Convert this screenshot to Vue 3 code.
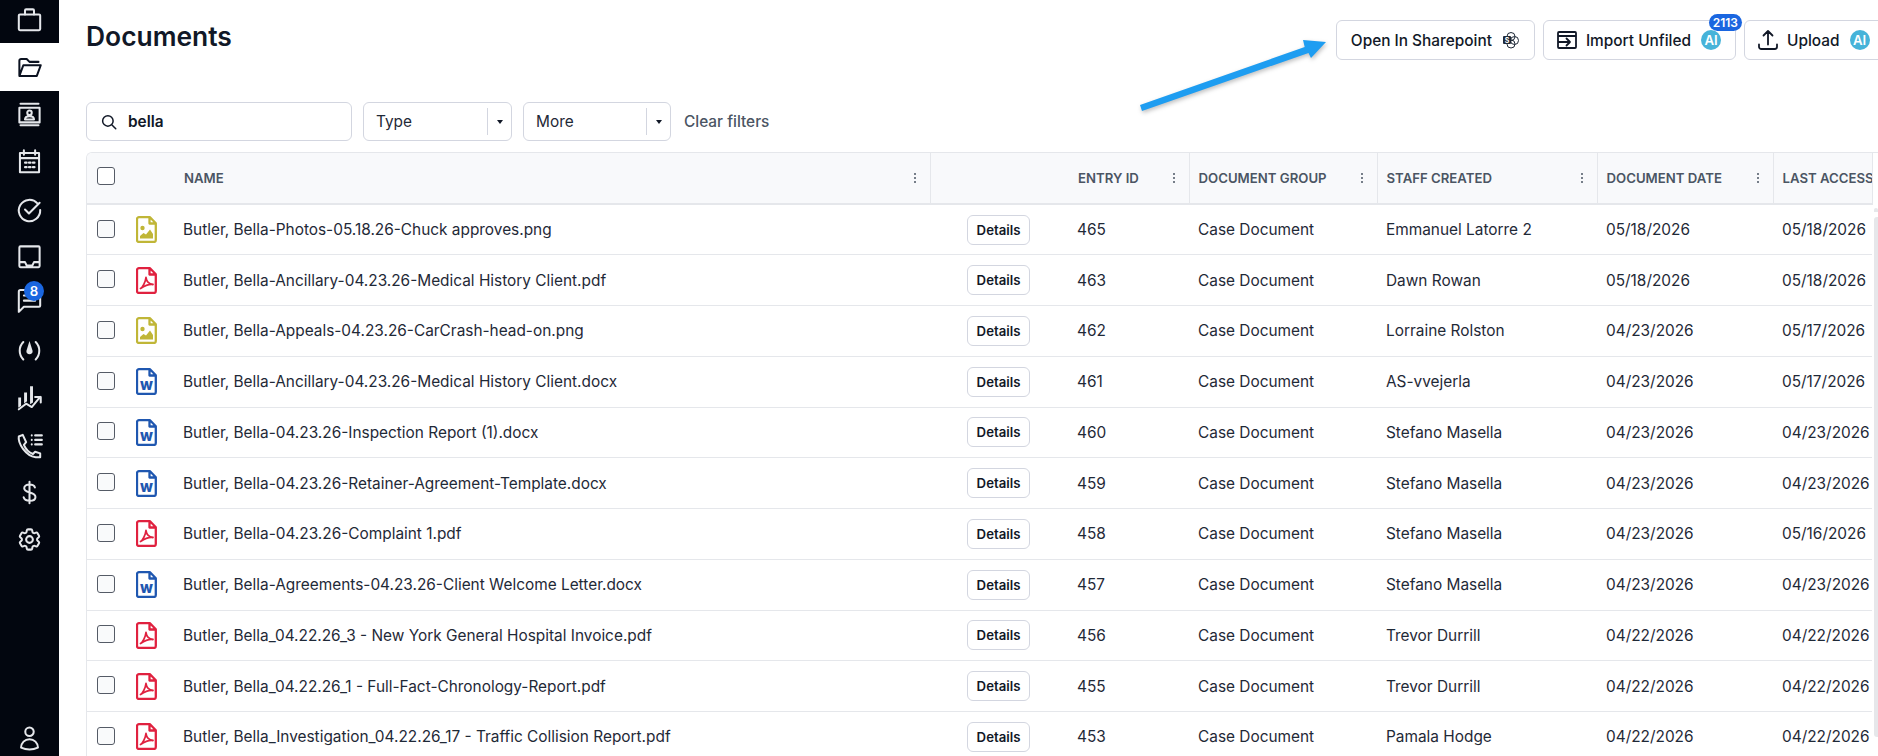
<script setup>
const navItems = [
  { name: "cases", paths: ["M3.500 7.500h17a1 1 0 0 1 1 1v12a1 1 0 0 1-1 1h-17a1 1 0 0 1-1-1v-12a1 1 0 0 1 1-1Z", "M8 7.500V4a1 1 0 0 1 1-1h6a1 1 0 0 1 1 1v3.500"] },
  { name: "documents", active: true, paths: ["M3 19V6a1.500 1.500 0 0 1 1.500-1.500h5L12 7h8M3 19.500h15.500L22 10H6.500L3 19.500Z"] },
  { name: "contacts", paths: ["M4 2.500h16M4 21.500h16M3 6h18v13H3ZM8 16.500c0-2 1.500-3 4-3s4 1 4 3ZM14 10.500a2 2 0 1 1-4 0 2 2 0 0 1 4 0Z"] },
  { name: "calendar", paths: ["M7 2v4M17 2v4M3.500 4.500h17v17h-17ZM3.500 9h17", "M8 13h1.500M11.500 13h1.500M15 13h1.500M8 17h1.500M11.500 17h1.500M15 17h1.500"] },
  { name: "tasks", paths: ["M19 6.500A9.500 9.500 0 1 0 21.500 12.500", "M8 12l3.500 3.500L21 6"] },
  { name: "inbox", paths: ["M4 3h16a1 1 0 0 1 1 1v16.500a1 1 0 0 1-1 1H4a1 1 0 0 1-1-1V4a1 1 0 0 1 1-1ZM3 17h5l1.500 3h5l1.500-3h5"] },
  { name: "messages", badge: 8, paths: ["M4 3.500h16.500a1 1 0 0 1 1 1v13a1 1 0 0 1-1 1H7L2.500 23V5a1.500 1.500 0 0 1 1.500-1.500ZM7 8.500h10M7 13h10"] },
  { name: "speed", paths: ["M6.500 4.500a11 11 0 0 0 0 15.500M17.500 4.500a11 11 0 0 1 0 15.500"], solid: ["M12 3.500l2.800 9a2.800 2.800 0 1 1-5.600 0Z"] },
  { name: "reports", paths: ["M2.500 22.500l6.500-5 5 3 7.500-9M17 11.500h5v5"], solid: ["M2 12h2.500v7.500L2 21ZM7.200 7.500h2.600v7.800l-2.600 2ZM12.500 2h2.600v14.500l-2.600 1.500Z"] },
  { name: "calls", paths: ["M14 3h.01M14 7h.01M14 11h.01M17 3h6M17 7h6M17 11h6", "M6 2.500 2.500 4c-1 6 6 17 15 18.500h4v-3.500l-4.500-1.500-2 2c-3-1-6.500-4.500-8-8l2-2.500Z"] },
  { name: "billing", paths: ["M12 2.500v19M16.800 7.500c-.5-1.800-2.300-2.600-4.800-2.600-2.800 0-4.700 1.200-4.700 3.300 0 4.800 10 2.800 10 7.800 0 2.200-2.200 3.400-5 3.400-2.900 0-5-1-5.500-3.100"] },
  { name: "settings", paths: ["M9.594 3.94c.09-.542.56-.94 1.11-.94h2.593c.55 0 1.02.398 1.11.94l.213 1.281c.063.374.313.686.645.87.074.04.147.083.22.127.325.196.72.257 1.075.124l1.217-.456a1.125 1.125 0 0 1 1.37.49l1.296 2.247a1.125 1.125 0 0 1-.26 1.431l-1.003.827c-.293.241-.438.613-.43.992a7.723 7.723 0 0 1 0 .255c-.008.378.137.75.43.991l1.004.827c.424.35.534.955.26 1.43l-1.298 2.247a1.125 1.125 0 0 1-1.369.491l-1.217-.456c-.355-.133-.75-.072-1.076.124a6.47 6.47 0 0 1-.22.128c-.331.183-.581.495-.644.869l-.213 1.281c-.09.543-.56.94-1.11.94h-2.594c-.55 0-1.019-.398-1.11-.94l-.213-1.281c-.062-.374-.312-.686-.644-.87a6.52 6.52 0 0 1-.22-.127c-.325-.196-.72-.257-1.076-.124l-1.217.456a1.125 1.125 0 0 1-1.369-.49l-1.297-2.247a1.125 1.125 0 0 1 .26-1.431l1.004-.827c.292-.24.437-.613.43-.991a6.932 6.932 0 0 1 0-.255c.007-.38-.138-.751-.43-.992l-1.004-.827a1.125 1.125 0 0 1-.26-1.43l1.297-2.247a1.125 1.125 0 0 1 1.37-.491l1.216.456c.356.133.751.072 1.076-.124.072-.044.146-.086.22-.128.332-.183.582-.495.644-.869l.214-1.28Z", "M15 12a3 3 0 1 1-6 0 3 3 0 0 1 6 0Z"] },
];

const columns = [
  { label: "", cls: "col-check" },
  { label: "", cls: "col-icon" },
  { label: "NAME", cls: "col-name", menu: true, line: true },
  { label: "", cls: "col-action" },
  { label: "ENTRY ID", cls: "col-entry", menu: true, line: true },
  { label: "DOCUMENT GROUP", cls: "col-group", menu: true, line: true },
  { label: "STAFF CREATED", cls: "col-staff", menu: true, line: true },
  { label: "DOCUMENT DATE", cls: "col-date", menu: true, line: true },
  { label: "LAST ACCESS", cls: "col-last", line: true },
];

const docs = [
  { type: "image", name: "Butler, Bella-Photos-05.18.26-Chuck approves.png", id: 465, staff: "Emmanuel Latorre 2", date: "05/18/2026", last: "05/18/2026" },
  { type: "pdf", name: "Butler, Bella-Ancillary-04.23.26-Medical History Client.pdf", id: 463, staff: "Dawn Rowan", date: "05/18/2026", last: "05/18/2026" },
  { type: "image", name: "Butler, Bella-Appeals-04.23.26-CarCrash-head-on.png", id: 462, staff: "Lorraine Rolston", date: "04/23/2026", last: "05/17/2026" },
  { type: "word", name: "Butler, Bella-Ancillary-04.23.26-Medical History Client.docx", id: 461, staff: "AS-vvejerla", date: "04/23/2026", last: "05/17/2026" },
  { type: "word", name: "Butler, Bella-04.23.26-Inspection Report (1).docx", id: 460, staff: "Stefano Masella", date: "04/23/2026", last: "04/23/2026" },
  { type: "word", name: "Butler, Bella-04.23.26-Retainer-Agreement-Template.docx", id: 459, staff: "Stefano Masella", date: "04/23/2026", last: "04/23/2026" },
  { type: "pdf", name: "Butler, Bella-04.23.26-Complaint 1.pdf", id: 458, staff: "Stefano Masella", date: "04/23/2026", last: "05/16/2026" },
  { type: "word", name: "Butler, Bella-Agreements-04.23.26-Client Welcome Letter.docx", id: 457, staff: "Stefano Masella", date: "04/23/2026", last: "04/23/2026" },
  { type: "pdf", name: "Butler, Bella_04.22.26_3 - New York General Hospital Invoice.pdf", id: 456, staff: "Trevor Durrill", date: "04/22/2026", last: "04/22/2026" },
  { type: "pdf", name: "Butler, Bella_04.22.26_1 - Full-Fact-Chronology-Report.pdf", id: 455, staff: "Trevor Durrill", date: "04/22/2026", last: "04/22/2026" },
  { type: "pdf", name: "Butler, Bella_Investigation_04.22.26_17 - Traffic Collision Report.pdf", id: 453, staff: "Pamala Hodge", date: "04/22/2026", last: "04/22/2026" },
];
</script>

<template>
  <div class="page">
    <aside class="sidebar">
      <nav class="nav">
        <a v-for="item in navItems" :key="item.name" class="nav-item" :class="[item.name, { active: item.active }]">
          <svg class="nav-icon" viewBox="0 0 24 24">
            <path v-for="d in item.paths" :key="d" :d="d" />
            <path v-for="d in item.solid" :key="d" :d="d" class="solid" />
          </svg>
          <span v-if="item.badge" class="nav-badge">{{ item.badge }}</span>
        </a>
      </nav>
      <a class="nav-item profile">
        <svg class="nav-icon" viewBox="0 0 24 24">
          <path d="M15.750 6a3.750 3.750 0 1 1-7.500 0 3.750 3.750 0 0 1 7.500 0ZM4.500 20.100a7.500 7.500 0 0 1 15 0A17.900 17.900 0 0 1 12 21.750c-2.700 0-5.200-.6-7.500-1.650Z" />
        </svg>
      </a>
    </aside>

    <main class="main">
      <div class="top">
        <h1>Documents</h1>
        <div class="actions">
          <button class="btn">
            Open In Sharepoint
            <svg class="sp-icon" width="18" height="18" viewBox="0 0 18 18">
              <circle cx="9" cy="5.500" r="4" />
              <circle cx="12.500" cy="9.500" r="4" />
              <circle cx="9" cy="13" r="4" />
              <rect x="1" y="5" width="8" height="8" rx="1" class="sp-box" />
              <text x="5" y="11.500" class="sp-letter">S</text>
            </svg>
          </button>
          <button class="btn">
            <svg class="btn-icon" viewBox="0 0 24 24">
              <path d="M3 8h18M4 4h16a1 1 0 0 1 1 1v14a1 1 0 0 1-1 1H4a1 1 0 0 1-1-1V5a1 1 0 0 1 1-1ZM3 14h12M11.500 10.500 15 14l-3.500 3.500" />
            </svg>
            Import Unfiled
            <span class="ai">AI</span>
            <span class="count">2113</span>
          </button>
          <button class="btn">
            <svg class="btn-icon" viewBox="0 0 24 24">
              <path d="M3 16.500v2.250A2.250 2.250 0 0 0 5.250 21h13.500A2.250 2.250 0 0 0 21 18.750V16.500m-13.500-9L12 3m0 0 4.500 4.500M12 3v13.500" />
            </svg>
            Upload
            <span class="ai">AI</span>
          </button>
        </div>
      </div>

      <div class="filters">
        <label class="search">
          <svg class="search-icon" viewBox="0 0 24 24">
            <path d="M16 16l5 5M17.500 10.500a7 7 0 1 1-14 0 7 7 0 0 1 14 0Z" />
          </svg>
          <span>bella</span>
        </label>
        <div class="select select-type">
          <span class="select-label">Type</span>
          <span class="caret"></span>
        </div>
        <div class="select select-more">
          <span class="select-label">More</span>
          <span class="caret"></span>
        </div>
        <a class="clear">Clear filters</a>
      </div>

      <div class="table-wrap">
        <table class="grid">
          <colgroup>
            <col v-for="c in columns" :key="c.cls" :class="c.cls" />
          </colgroup>
          <thead>
            <tr>
              <th v-for="(c, i) in columns" :key="c.cls" :class="{ line: c.line }">
                <span v-if="i === 0" class="check head-check"></span>
                <div v-else class="th-in">
                  <span>{{ c.label }}</span>
                  <span v-if="c.menu" class="dots"><i></i><i></i><i></i></span>
                </div>
              </th>
            </tr>
          </thead>
          <tbody>
            <tr v-for="doc in docs" :key="doc.id">
              <td><span class="check"></span></td>
              <td class="icon-cell">
                <svg class="file" :class="doc.type" viewBox="0 0 21 27">
                  <path class="doc" d="M3 1.200h11l5.800 6V24a2 2 0 0 1-2 2H3a2 2 0 0 1-2-2V3.200a2 2 0 0 1 2-2ZM13.500 1.500v6h6" />
                  <template v-if="doc.type === 'image'">
                    <circle class="fill" cx="6.500" cy="12" r="2.200" />
                    <path class="fill" d="M4 22.500v-2.500l3.500-3 2.500 1.500 4-5 3 4.500v4.500Z" />
                  </template>
                  <text v-else-if="doc.type === 'word'" x="10.500" y="21.500" class="w">w</text>
                  <path v-else class="acro" d="M4.500 21.500c2-1 5-6.500 5.500-11 .5 4 3 6.500 7 7-3.500-.5-8 1-12.500 4Z" />
                </svg>
              </td>
              <td class="name">{{ doc.name }}</td>
              <td class="action"><button class="details">Details</button></td>
              <td class="pad entry">{{ doc.id }}</td>
              <td class="pad">Case Document</td>
              <td class="pad">{{ doc.staff }}</td>
              <td class="pad">{{ doc.date }}</td>
              <td class="pad">{{ doc.last }}</td>
            </tr>
          </tbody>
        </table>
        <div class="scroll-thumb"></div>
      </div>

      <!-- annotation drawn on top of the screenshot -->
      <svg class="pointer" width="200" height="85" viewBox="0 0 200 85">
        <path d="M-2 71 162.700 13 161 6 184 8 169 24 166.500 19 0 77Z" />
      </svg>
    </main>
  </div>
</template>

<style>
html, body {
  margin: 0;
  height: 100%;
  overflow: hidden;
  background: #fff;
}
</style>

<style scoped>
.page {
  display: flex;
  width: 1878px;
  height: 756px;
  overflow: hidden;
  font-family: Inter, "Liberation Sans", sans-serif;
  font-size: 15.400px;
  color: #1f2937;
}

/* sidebar */
.sidebar {
  flex: 0 0 59px;
  display: flex;
  flex-direction: column;
  justify-content: space-between;
  background: #02060f;
  overflow: hidden;
}
.nav {
  margin-top: -4px;
}
.nav-item {
  position: relative;
  display: flex;
  align-items: center;
  justify-content: center;
  height: 47.200px;
  color: #e5e7eb;
}
.nav-item.active {
  background: #fff;
  color: #0b1220;
  height: 48px;
}
.nav-item.messages .nav-icon {
  margin-bottom: 8px;
}
.nav-item.profile {
  margin-bottom: -6px;
}
.nav-icon {
  width: 27px;
  height: 27px;
  fill: none;
  stroke: currentColor;
  stroke-width: 1.800;
  stroke-linecap: round;
  stroke-linejoin: round;
  overflow: visible;
}
.solid {
  fill: currentColor;
  stroke: none;
}
.nav-badge {
  position: absolute;
  top: 1px;
  left: 24px;
  width: 20px;
  height: 20px;
  border-radius: 50%;
  background: #1a66e0;
  color: #fff;
  font-size: 13.200px;
  font-weight: 600;
  line-height: 20px;
  text-align: center;
}

/* main */
.main {
  position: relative;
  flex: 1;
  min-width: 0;
  padding-left: 27px;
  overflow: hidden;
}
.top {
  display: flex;
  align-items: flex-start;
  justify-content: space-between;
  height: 102px;
  padding-top: 20px;
  box-sizing: border-box;
}
h1 {
  margin: 0;
  font-size: 26.400px;
  line-height: 32px;
  font-weight: 600;
  color: #111827;
}
.actions {
  display: flex;
  gap: 8px;
  margin-right: -6.500px;
}
.btn {
  position: relative;
  display: flex;
  align-items: center;
  gap: 10px;
  height: 40px;
  padding: 0 14px;
  background: #fff;
  border: 1px solid #d3d6e0;
  border-radius: 6px;
  font: 500 15.400px Inter, "Liberation Sans", sans-serif;
  color: #111827;
}
.btn-icon {
  width: 24px;
  height: 24px;
  margin: 0 -3px;
  fill: none;
  stroke: #111827;
  stroke-width: 1.800;
  stroke-linecap: round;
  stroke-linejoin: round;
}
.sp-icon {
  fill: none;
  stroke: #1f2937;
  stroke-width: 1;
}
.sp-box {
  fill: #1f2937;
  stroke: none;
}
.sp-letter {
  fill: #fff;
  stroke: none;
  font-size: 7px;
  font-weight: 700;
  text-anchor: middle;
}
.ai {
  width: 20px;
  height: 20px;
  border-radius: 50%;
  background: #46b3d9;
  color: #fff;
  font-size: 13.200px;
  font-weight: 600;
  line-height: 20px;
  text-align: center;
}
.count {
  position: absolute;
  top: -7px;
  right: -7px;
  padding: 0 4px;
  height: 17px;
  border-radius: 9px;
  background: #1a66e0;
  color: #fff;
  font-size: 12px;
  font-weight: 600;
  line-height: 17px;
}

/* filters */
.filters {
  display: flex;
  align-items: center;
  height: 39px;
  margin-bottom: 11px;
}
.search {
  display: flex;
  align-items: center;
  gap: 10px;
  width: 266px;
  height: 39px;
  margin-right: 11px;
  padding-left: 13px;
  box-sizing: border-box;
  border: 1px solid #d3d6e0;
  border-radius: 6px;
  font-weight: 600;
  color: #111827;
}
.search-icon {
  width: 18px;
  height: 18px;
  fill: none;
  stroke: #111827;
  stroke-width: 2;
  stroke-linecap: round;
}
.select {
  position: relative;
  display: flex;
  align-items: center;
  height: 39px;
  box-sizing: border-box;
  padding-left: 12px;
  border: 1px solid #d3d6e0;
  border-radius: 6px;
}
.select-type {
  width: 149px;
  margin-right: 11px;
}
.select-more {
  width: 148px;
  margin-right: 13px;
}
.select-label {
  flex: 1;
}
.caret {
  display: flex;
  align-items: center;
  justify-content: center;
  width: 23px;
  height: 27px;
  border-left: 1px solid #d3d6e0;
}
.caret::after {
  content: "";
  border-left: 3.500px solid transparent;
  border-right: 3.500px solid transparent;
  border-top: 4px solid #111827;
}
.clear {
  color: #4b5563;
  font-weight: 500;
}

/* table */
.table-wrap {
  position: relative;
  border-left: 1px solid #e5e7eb;
  border-top: 1px solid #e5e7eb;
  border-radius: 6px 0 0 0;
  overflow: hidden;
}
.grid {
  width: 1785px;
  table-layout: fixed;
  border-collapse: collapse;
}
.col-check { width: 40px; }
.col-icon { width: 48px; }
.col-name { width: 755px; }
.col-action { width: 139px; }
.col-entry { width: 120px; }
.col-group { width: 188px; }
.col-staff { width: 220px; }
.col-date { width: 176px; }
.col-last { width: 99px; }
th {
  height: 50px;
  padding: 0;
  background: #f8f9fb;
  border-bottom: 2px solid #e5e7eb;
  font-size: 13.200px;
  font-weight: 600;
  color: #4b5563;
  text-align: left;
}
th.line {
  border-right: 1px solid #e5e7eb;
}
.th-in {
  display: flex;
  align-items: center;
  justify-content: space-between;
  padding: 0 14px 0 9px;
  white-space: nowrap;
  overflow: hidden;
}
.dots {
  display: flex;
  flex-direction: column;
  gap: 2px;
  flex: none;
}
.dots i {
  width: 2px;
  height: 2px;
  border-radius: 50%;
  background: #4b5563;
}
td {
  height: 50.750px;
  padding: 0;
  box-sizing: border-box;
  border-bottom: 1px solid #e5e7eb;
  white-space: nowrap;
}
td.name {
  padding-left: 8px;
}
td.pad {
  padding-left: 9px;
}
td.entry {
  padding-left: 8px;
}
.check {
  display: block;
  width: 18px;
  height: 18px;
  margin: 0 0 2px 10px;
  box-sizing: border-box;
  border: 1px solid #555b66;
  border-radius: 3px;
  background: #f9fafb;
}
.head-check {
  margin-bottom: 5px;
  background: #fff;
}
.icon-cell {
  line-height: 0;
}
.file {
  width: 21px;
  height: 27px;
  margin-left: 9px;
}
.doc {
  fill: none;
  stroke-width: 2.300;
  stroke-linejoin: round;
}
.image .doc { stroke: #c0b637; }
.image .fill { fill: #c0b637; }
.pdf .doc { stroke: #e0213f; }
.word .doc { stroke: #1f57b0; }
.acro {
  fill: none;
  stroke: #e0213f;
  stroke-width: 1.800;
  stroke-linejoin: round;
}
.w {
  fill: #1f57b0;
  font-size: 15px;
  font-weight: 800;
  text-anchor: middle;
}
.action {
  padding-left: 37px;
}
.details {
  display: block;
  width: 63px;
  height: 30px;
  padding: 0;
  background: #fff;
  border: 1px solid #d3d6e0;
  border-radius: 6px;
  font: 600 13.200px Inter, "Liberation Sans", sans-serif;
  color: #111827;
}
.scroll-thumb {
  position: absolute;
  top: 64px;
  right: 0;
  width: 4px;
  height: 520px;
  border-radius: 3px 0 0 3px;
  background: #e6e7ea;
}
.scroll-thumb::before {
  content: "";
  position: absolute;
  top: -9px;
  left: 0;
  width: 4px;
  height: 4px;
  border-radius: 2px 2px 0 0;
  background: #e6e7ea;
}
.pointer {
  position: absolute;
  top: 34px;
  left: 1083px;
  overflow: visible;
  fill: #1e9df1;
  filter: drop-shadow(1px 2px 2px rgba(0, 0, 0, 0.25));
}
</style>
